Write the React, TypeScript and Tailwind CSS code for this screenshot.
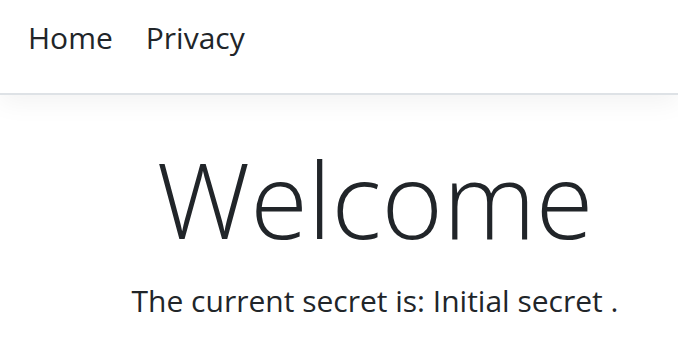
export default function App() {
  return (
    <div className="min-h-[358px] bg-white text-[#212529]" style={{ fontFamily: '"Open Sans", "Noto Sans", sans-serif' }}>
      <header className="h-[95px] border-b-2 border-[#dee2e6] bg-white shadow-[0_8px_24px_rgba(0,0,0,0.05)]">
        <nav className="flex items-start gap-[33px] pl-[28px] pt-[23px] text-[30px] leading-none">
          <a href="#" className="text-[#212529]">Home</a>
          <a href="#" className="text-[#212529]">Privacy</a>
        </nav>
      </header>
      <main className="pl-[72px] text-center">
        <h1 className="mt-[41px] text-[105px] font-light leading-[1.2]">Welcome</h1>
        <p className="mt-[24px] text-[30px] leading-none">The current secret is: Initial secret .</p>
      </main>
    </div>
  );
}
